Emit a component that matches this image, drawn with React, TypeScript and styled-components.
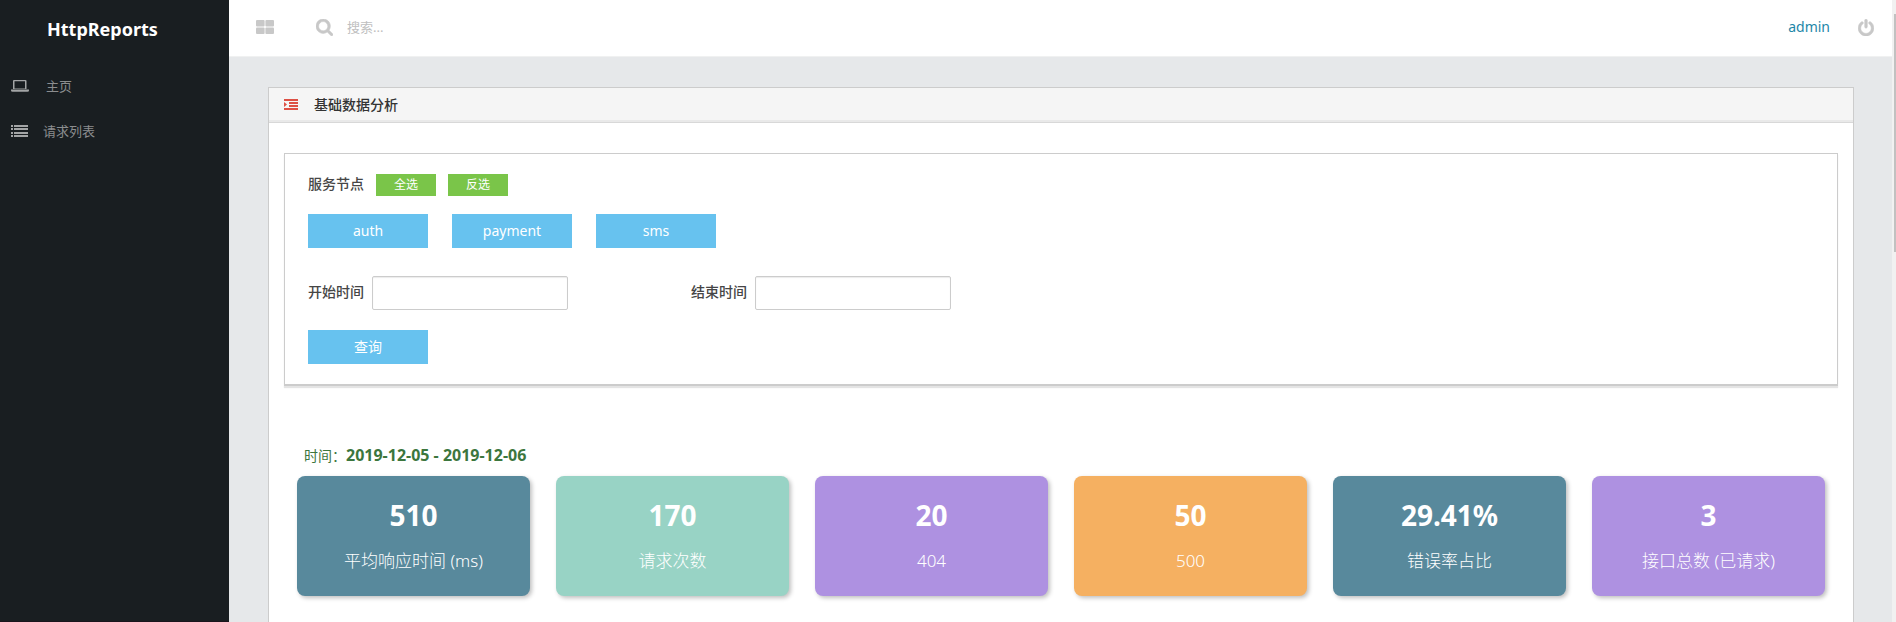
import React from 'react';
import styled, { createGlobalStyle } from 'styled-components';

const GlobalStyle = createGlobalStyle`
  * { box-sizing: border-box; }
  html, body, #root { height: 100%; }
  body {
    margin: 0;
    background: #e6e8ea;
    color: #464646;
    font-family: "Noto Sans", "Noto Sans CJK SC", sans-serif;
    font-size: 14px;
    line-height: 20px;
  }
  button, input { font: inherit; }
`;

const Page = styled.div`
  display: flex;
  height: 100vh;
  overflow: hidden;
`;

const Sidebar = styled.aside`
  flex: 0 0 229px;
  background: #191e21;
  border-bottom: 1px solid #1a151c;
`;

const Brand = styled.h1`
  margin: 0;
  padding: 16px 0 16px 47px;
  color: #fff;
  font-size: 18px;
  line-height: 26px;
  font-weight: 700;
`;

const Nav = styled.nav`
  display: flex;
  flex-direction: column;
  padding-top: 5px;
`;

const NavLink = styled.a<{ $gap: number }>`
  display: flex;
  align-items: center;
  gap: ${(p) => p.$gap}px;
  height: 45px;
  padding-left: 11px;
  color: #8b8d8f;
  font-size: 13px;
  text-decoration: none;
  svg { flex: none; fill: #a3a5a6; }
`;

const Main = styled.div`
  flex: 1;
  min-width: 0;
  display: flex;
  flex-direction: column;
`;

const Topbar = styled.header`
  flex: none;
  display: flex;
  align-items: center;
  height: 57px;
  padding: 0 18px 2px 27px;
  background: #fff;
  border-bottom: 1px solid #f0f1f1;
`;

const IconButton = styled.button`
  display: flex;
  padding: 0;
  border: 0;
  background: none;
  color: #c8c8c8;
`;

const Search = styled.label`
  flex: 1;
  display: flex;
  align-items: center;
  gap: 14px;
  margin-left: 42px;
  color: #c8c8c8;
`;

const SearchInput = styled.input`
  width: 200px;
  padding: 0;
  border: 0;
  outline: 0;
  background: none;
  font-size: 13px;
  &::placeholder { color: #c0c0c0; opacity: 1; }
`;

const UserLink = styled.a`
  margin-right: 28px;
  color: #1e87a8;
  text-decoration: none;
`;

const Content = styled.main`
  flex: 1;
  padding: 30px 38px 0 39px;
`;

const Panel = styled.section`
  min-height: 100%;
  background: #fff;
  border: 1px solid #ccc;
`;

const PanelHeader = styled.header`
  display: flex;
  align-items: center;
  gap: 16px;
  height: 35px;
  padding: 0 15px 1px;
  background: #f5f5f5;
  border-bottom: 1px solid #d8d8d8;
  box-shadow: inset 0 -2px 0 #e9e9e9;
`;

const PanelTitle = styled.h2`
  margin: 0;
  color: #333;
  font-size: 14px;
  line-height: 20px;
  font-weight: 500;
`;

const FilterBox = styled.form`
  margin: 30px 15px 0;
  padding: 20px 23px;
  border: 1px solid #ccc;
  border-bottom-width: 2px;
  box-shadow: 0 2px 1px #e4e4e4;
`;

const Row = styled.div<{ $gap: number; $top?: number }>`
  display: flex;
  align-items: center;
  gap: ${(p) => p.$gap}px;
  margin-top: ${(p) => p.$top ?? 0}px;
`;

const Caption = styled.span`
  padding-bottom: 2px;
  font-weight: 500;
`;

const SmallButton = styled.button`
  width: 60px;
  height: 22px;
  padding: 0;
  border: 0;
  background: #7ac549;
  color: #fff;
  font-size: 12px;
`;

const BlueButton = styled.button`
  width: 120px;
  height: 34px;
  padding: 0;
  border: 0;
  background: #67c2ef;
  color: #fff;
`;

const Field = styled.label`
  display: flex;
  align-items: center;
  gap: 8px;
`;

const TextInput = styled.input`
  width: 196px;
  height: 34px;
  padding: 6px 12px;
  border: 1px solid #ccc;
  border-radius: 2px;
  box-shadow: inset 0 1px 1px rgba(0, 0, 0, 0.08);
`;

const Summary = styled.section`
  padding: 59px 28px 26px;
`;

const Period = styled.p`
  margin: 0 0 10px;
  padding-left: 7px;
  color: #3c763d;
  strong { font-size: 16px; }
`;

const Cards = styled.div`
  display: grid;
  grid-template-columns: repeat(6, 1fr);
  gap: 26px;
`;

const Card = styled.article<{ $color: string }>`
  height: 120px;
  padding-top: 20px;
  border-radius: 8px;
  background: ${(p) => p.$color};
  box-shadow: 2px 2px 4px rgba(0, 0, 0, 0.25);
  color: #fff;
  text-align: center;
`;

const CardValue = styled.div`
  font-size: 28px;
  line-height: 38px;
  font-weight: 700;
`;

const CardLabel = styled.div`
  margin-top: 15px;
  font-size: 17px;
  line-height: 24px;
  font-weight: 300;
`;

const ScrollTrack = styled.div`
  flex: 0 0 4px;
  padding: 14px 0 0 2px;
  background: #f1f1f1;
`;

const ScrollThumb = styled.div`
  height: 238px;
  background: #c1c1c1;
`;

const GridIcon = () => (
  <svg width="18" height="14" viewBox="0 0 18 14" fill="currentColor" aria-hidden="true">
    <rect width="8.600" height="6.400" rx="1" />
    <rect x="9.400" width="8.600" height="6.400" rx="1" />
    <rect y="7.600" width="8.600" height="6.400" rx="1" />
    <rect x="9.400" y="7.600" width="8.600" height="6.400" rx="1" />
  </svg>
);

const SearchIcon = () => (
  <svg width="17" height="17" viewBox="64 128 1664 1664" fill="currentColor" stroke="currentColor" strokeWidth="50" aria-hidden="true">
    <path d="M1216 832q0-185-131.5-316.5t-316.5-131.5-316.5 131.5-131.5 316.5 131.5 316.5 316.5 131.5 316.5-131.5 131.5-316.5zm512 832q0 52-38 90t-90 38q-54 0-90-38l-343-342q-179 124-399 124-143 0-273.5-55.5t-225-150-150-225-55.5-273.5 55.5-273.5 150-225 225-150 273.5-55.5 273.5 55.5 225 150 150 225 55.5 273.5q0 220-124 399l343 343q37 37 37 90z" />
  </svg>
);

const PowerIcon = () => (
  <svg width="16" height="17" viewBox="128 0 1536 1664" fill="currentColor" stroke="currentColor" strokeWidth="50" aria-hidden="true">
    <path d="M1664 896q0 156-61 298t-164 245-245 164-298 61-298-61-245-164-164-245-61-298q0-182 80.5-343t226.5-270q43-32 95.5-25t83.5 50q32 42 24.5 94.5t-49.5 84.5q-98 74-151.5 181t-53.5 228q0 104 40.5 198.5t109.5 163.5 163.5 109.5 198.5 40.5 198.5-40.5 163.5-109.5 109.5-163.5 40.5-198.5q0-121-53.5-228t-151.5-181q-42-32-49.5-84.5t24.5-94.5q31-43 84-50t95 25q146 109 226.5 270t80.5 343zm-640-768v640q0 52-38 90t-90 38-90-38-38-90v-640q0-52 38-90t90-38 90 38 38 90z" />
  </svg>
);

const LaptopIcon = () => (
  <svg width="18" height="12" viewBox="0 0 18 12" aria-hidden="true">
    <path d="M3 0h11.500a1 1 0 0 1 1 1v8h-13.500v-8a1 1 0 0 1 1-1zM3.500 1.200v7.300h10.500v-7.300zM0 9.500h18v1a1.500 1.200 0 0 1-1.500 1.200h-15a1.500 1.200 0 0 1-1.500-1.200z" fillRule="evenodd" />
  </svg>
);

const ListIcon = () => (
  <svg width="17" height="12" viewBox="0 0 17 12" aria-hidden="true">
    <path d="M0 0h2v2H0zM3 0h14v2H3zM0 3h2v2H0zM3 3h14v2H3zM0 7h2v2H0zM3 7h14v2H3zM0 10h2v2H0zM3 10h14v2H3z" />
  </svg>
);

const IndentIcon = () => (
  <svg width="14" height="11" viewBox="0 0 14 11" fill="#dd5044" aria-hidden="true">
    <path d="M0 0h14v2H0zM5 3h9v2H5zM5 6h9v2H5zM0 9h14v2H0zM0 3l3 2.500-3 2.500z" />
  </svg>
);

const nodes = ['auth', 'payment', 'sms'];

const stats = [
  { value: '510', label: '平均响应时间 (ms)', color: '#58899c' },
  { value: '170', label: '请求次数', color: '#98d3c5' },
  { value: '20', label: '404', color: '#ae91e1' },
  { value: '50', label: '500', color: '#f5b061' },
  { value: '29.41%', label: '错误率占比', color: '#58899c' },
  { value: '3', label: '接口总数 (已请求)', color: '#ae91e1' },
];

export default function App() {
  return (
    <Page>
      <GlobalStyle />
      <Sidebar>
        <Brand>HttpReports</Brand>
        <Nav>
          <NavLink href="#home" $gap={17}><LaptopIcon />主页</NavLink>
          <NavLink href="#requests" $gap={15}><ListIcon />请求列表</NavLink>
        </Nav>
      </Sidebar>
      <Main>
        <Topbar>
          <IconButton type="button" aria-label="菜单"><GridIcon /></IconButton>
          <Search>
            <SearchIcon />
            <SearchInput type="text" placeholder="搜索..." aria-label="搜索" />
          </Search>
          <UserLink href="#admin">admin</UserLink>
          <IconButton type="button" aria-label="退出"><PowerIcon /></IconButton>
        </Topbar>
        <Content>
          <Panel>
            <PanelHeader>
              <IndentIcon />
              <PanelTitle>基础数据分析</PanelTitle>
            </PanelHeader>
            <FilterBox onSubmit={(e) => e.preventDefault()}>
              <Row $gap={12}>
                <Caption>服务节点</Caption>
                <SmallButton type="button">全选</SmallButton>
                <SmallButton type="button">反选</SmallButton>
              </Row>
              <Row $gap={24} $top={18}>
                {nodes.map((n) => <BlueButton key={n} type="button">{n}</BlueButton>)}
              </Row>
              <Row $gap={123} $top={28}>
                <Field><Caption>开始时间</Caption><TextInput type="text" /></Field>
                <Field><Caption>结束时间</Caption><TextInput type="text" /></Field>
              </Row>
              <Row $gap={24} $top={20}>
                <BlueButton type="submit">查询</BlueButton>
              </Row>
            </FilterBox>
            <Summary>
              <Period>时间：<strong>2019-12-05 - 2019-12-06</strong></Period>
              <Cards>
                {stats.map((s) => (
                  <Card key={s.label} $color={s.color}>
                    <CardValue>{s.value}</CardValue>
                    <CardLabel>{s.label}</CardLabel>
                  </Card>
                ))}
              </Cards>
            </Summary>
          </Panel>
        </Content>
      </Main>
      <ScrollTrack><ScrollThumb /></ScrollTrack>
    </Page>
  );
}
